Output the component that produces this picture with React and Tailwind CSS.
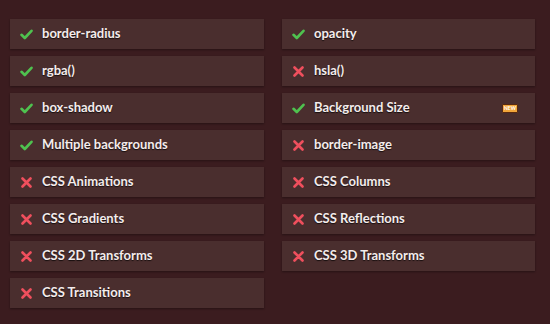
const left = [
  { name: 'border-radius', ok: true },
  { name: 'rgba()', ok: true },
  { name: 'box-shadow', ok: true },
  { name: 'Multiple backgrounds', ok: true },
  { name: 'CSS Animations', ok: false },
  { name: 'CSS Gradients', ok: false },
  { name: 'CSS 2D Transforms', ok: false },
  { name: 'CSS Transitions', ok: false },
]

const right = [
  { name: 'opacity', ok: true },
  { name: 'hsla()', ok: false },
  { name: 'Background Size', ok: true, isNew: true },
  { name: 'border-image', ok: false },
  { name: 'CSS Columns', ok: false },
  { name: 'CSS Reflections', ok: false },
  { name: 'CSS 3D Transforms', ok: false },
]

function Check() {
  return (
    <svg width="13" height="11" viewBox="0 0 13 11" className="shrink-0">
      <path d="M1.5 5.8 L4.8 9 L11.5 1.8" fill="none" stroke="#4fc24f" strokeWidth="2.6" strokeLinecap="round" strokeLinejoin="round" />
    </svg>
  )
}

function Cross() {
  return (
    <svg width="13" height="11" viewBox="0 0 13 11" className="shrink-0">
      <path d="M2.5 1.5 L10.5 9.5 M10.5 1.5 L2.5 9.5" fill="none" stroke="#ef4f5d" strokeWidth="2.6" strokeLinecap="round" />
    </svg>
  )
}

function Row({ item }) {
  return (
    <div className="h-[30px] bg-[#4a2e2e] flex items-center pl-[10px] pr-[17px] shadow-[0_1px_2px_rgba(0,0,0,0.35)]">
      {item.ok ? <Check /> : <Cross />}
      <span className="ml-[9px] text-[13px] font-bold text-[#f4ecec] [text-shadow:0_1px_1px_rgba(0,0,0,0.7)]">
        {item.name}
      </span>
      {item.isNew && (
        <span className="ml-auto h-[9px] w-[16px] rounded-[1px] bg-[#f2a53a] border border-[#5a2a10] text-[5px] leading-[7px] font-bold text-white text-center">
          NEW
        </span>
      )}
    </div>
  )
}

export default function App() {
  return (
    <div className="w-[550px] h-[324px] bg-[#3b1c1f] pt-[19px] pl-[10px] pr-[15px] flex gap-[18px] font-['Lato','Open_Sans',sans-serif]">
      <div className="w-[254px] flex flex-col gap-[7px]">
        {left.map((it) => <Row key={it.name} item={it} />)}
      </div>
      <div className="w-[253px] flex flex-col gap-[7px]">
        {right.map((it) => <Row key={it.name} item={it} />)}
      </div>
    </div>
  )
}
